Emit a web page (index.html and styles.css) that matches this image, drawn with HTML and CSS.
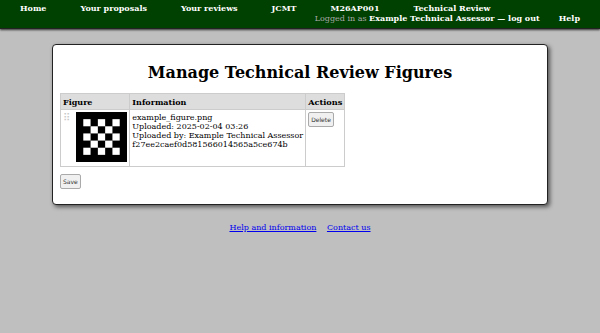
FILE: index.html
```html
<!DOCTYPE html>
<html lang="en">
<head>
    <meta charset="UTF-8">
    <meta name="viewport" content="width=device-width, initial-scale=1.0">
    <title>Manage Technical Review Figures</title>
    <link rel="stylesheet" href="styles.css">
</head>
<body>
    <nav class="nav-bar">
        <ul class="nav-left">
            <li><a href="#">Home</a></li>
            <li><a href="#">Your proposals</a></li>
            <li><a href="#">Your reviews</a></li>
            <li><a href="#">JCMT</a></li>
            <li><a href="#">M26AP001</a></li>
            <li><a href="#">Technical Review</a></li>
        </ul>
        <ul class="nav-right">
            <li class="login-info">Logged in as <b>Example Technical Assessor &mdash; <a href="#">log out</a></b></li>
            <li><a href="#">Help</a></li>
        </ul>
    </nav>

    <div class="main-box">
        <h1>Manage Technical Review Figures</h1>

        <table class="figure-table">
            <tr>
                <th colspan="2">Figure</th>
                <th>Information</th>
                <th class="actions-head">Actions</th>
            </tr>
            <tr>
                <td class="handle">&#x283F;</td>
                <td class="figure-cell">
                    <svg class="figure-img" viewBox="0 0 7 7" width="51" height="50" preserveAspectRatio="none">
                        <rect width="7" height="7" fill="#000"/>
                        <g fill="#fff">
                            <rect x="1" y="1" width="1" height="1"/>
                            <rect x="3" y="1" width="1" height="1"/>
                            <rect x="5" y="1" width="1" height="1"/>
                            <rect x="2" y="2" width="1" height="1"/>
                            <rect x="4" y="2" width="1" height="1"/>
                            <rect x="1" y="3" width="1" height="1"/>
                            <rect x="3" y="3" width="1" height="1"/>
                            <rect x="5" y="3" width="1" height="1"/>
                            <rect x="2" y="4" width="1" height="1"/>
                            <rect x="4" y="4" width="1" height="1"/>
                            <rect x="1" y="5" width="1" height="1"/>
                            <rect x="3" y="5" width="1" height="1"/>
                            <rect x="5" y="5" width="1" height="1"/>
                        </g>
                    </svg>
                </td>
                <td class="info-cell">
                    example_figure.png<br>
                    Uploaded: 2025-02-04 03:26<br>
                    Uploaded by: Example Technical Assessor<br>
                    f27ee2caef0d581566014565a5ce674b
                </td>
                <td class="action-cell"><button class="small-btn">Delete</button></td>
            </tr>
        </table>

        <button class="small-btn save-btn">Save</button>
    </div>

    <div class="footer">
        <a href="#">Help and information</a>
        <a href="#">Contact us</a>
    </div>
</body>
</html>
```

FILE: styles.css
```css
body {
    margin: 0;
    background: #bfbfbf;
    font-family: "DejaVu Serif", serif;
    font-size: 8px;
    color: #000;
}

.nav-bar {
    background: #004000;
    display: flex;
    flex-wrap: wrap;
    padding: 3px 3px 4px 3px;
    box-shadow: 0 1px 2px #333;
    border-bottom: 1px solid #222;
    font-size: 8px;
    font-weight: bold;
    line-height: 10px;
}

.nav-bar ul {
    list-style: none;
    margin: 0;
    padding: 0;
    display: flex;
}

.nav-bar .nav-right {
    margin-left: auto;
}

.nav-bar li {
    padding: 0 17px;
}

.nav-bar a {
    color: #fff;
    text-decoration: none;
}

.nav-bar .login-info {
    color: #aaa;
    font-weight: normal;
    padding: 0 2px;
}

.login-info b {
    color: #fff;
}

.main-box {
    background: #fff;
    margin: 15px 52px 0 52px;
    border: 1px solid #222;
    border-radius: 4px;
    box-shadow: 2px 2px 4px #555;
    padding: 0 7px 15px 7px;
}

h1 {
    text-align: center;
    font-size: 16px;
    margin: 18px 0 11px 0;
    line-height: 19px;
}

.figure-table {
    border-collapse: collapse;
    font-size: 8px;
}

.figure-table th,
.figure-table td {
    border: 1px solid #ccc;
    vertical-align: top;
    padding: 2px 2px;
}

.figure-table th {
    background: #ddd;
    text-align: left;
    padding: 3px 2px 2px 2px;
}

.figure-table .actions-head {
    padding-right: 2px;
    font-size: 8.2px;
}

.figure-table .handle {
    border-right: none;
    color: #c8c8c8;
    font-family: "DejaVu Sans", sans-serif;
    font-size: 10px;
    line-height: 10px;
    padding: 3px 5px 2px 2px;
}

.figure-table .figure-cell {
    border-left: none;
    padding: 2px 2px 4px 1px;
}

.figure-table .info-cell {
    padding: 3px 2px 2px 2px;
}

.figure-img {
    display: block;
}

.small-btn {
    font-family: "DejaVu Sans", sans-serif;
    font-size: 6px;
    padding: 3px 2px;
    border: 1px solid #aaa;
    border-radius: 2px;
    background: #f0f0f0;
    color: #333;
}

.save-btn {
    margin-top: 7px;
}

.footer {
    text-align: center;
    margin-top: 18px;
    font-size: 8px;
}

.footer a {
    color: #00e;
    margin: 0 4px;
}
```
